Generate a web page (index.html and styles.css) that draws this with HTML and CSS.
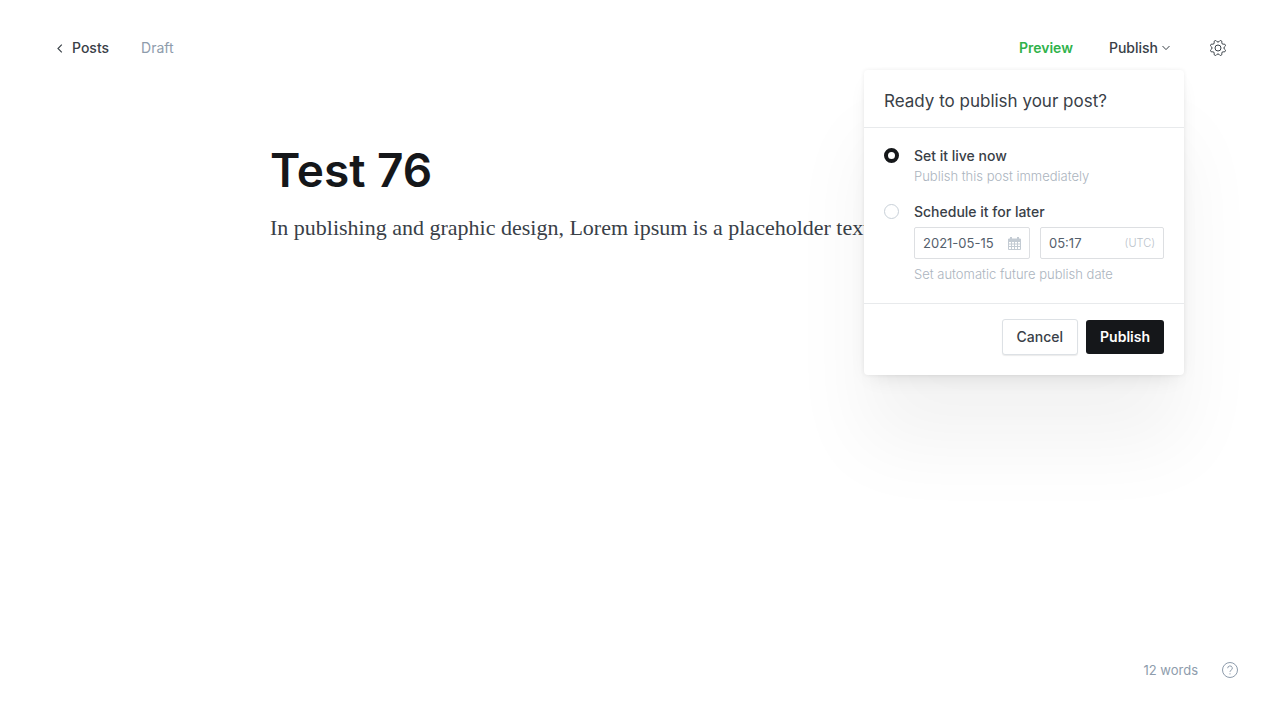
FILE: index.html
```html
<!DOCTYPE html>
<html lang="en">
<head>
<meta charset="utf-8">
<meta name="viewport" content="width=device-width, initial-scale=1">
<title>Test 76</title>
<link rel="stylesheet" href="styles.css">
</head>
<body>
<div class="editor">
  <header class="toolbar">
    <nav class="breadcrumb">
      <a class="back" href="#posts">
        <svg class="back-icon" viewBox="0 0 6 8" aria-hidden="true"><path d="M4.600.5 1.200 4l3.400 3.500"/></svg>
        Posts
      </a>
      <span class="status">Draft</span>
    </nav>
    <div class="actions">
      <button class="preview" type="button">Preview</button>
      <div class="publish-menu">
        <button class="publish-trigger" type="button" aria-expanded="true">
          Publish
          <svg class="chevron" viewBox="0 0 8 6" aria-hidden="true"><path d="M.5 1 4 4.6 7.5 1"/></svg>
        </button>
        <form class="dropdown">
          <h2 class="dropdown-title">Ready to publish your post?</h2>
          <div class="options">
            <div class="option">
              <input class="radio" type="radio" name="when" id="now" checked>
              <div class="option-body">
                <label class="option-label" for="now">Set it live now</label>
                <p class="hint">Publish this post immediately</p>
              </div>
            </div>
            <div class="option">
              <input class="radio" type="radio" name="when" id="later">
              <div class="option-body">
                <label class="option-label" for="later">Schedule it for later</label>
                <div class="fields">
                  <div class="field">
                    <input class="field-input" type="text" value="2021-05-15" aria-label="Publish date">
                    <svg class="calendar" viewBox="0 0 13 13" aria-hidden="true"><path d="M.5 2h12v10.500H.5zM.5 4.500h12M.5 7h12M.5 9.500h12M3.500 4.500v8M6.500 4.500v8M9.500 4.500v8"/><path d="M1 3h11M3 0v2M10 0v2" stroke-width="2"/></svg>
                  </div>
                  <div class="field field-time">
                    <input class="field-input" type="text" value="05:17" aria-label="Publish time">
                    <span class="zone">(UTC)</span>
                  </div>
                </div>
                <p class="hint">Set automatic future publish date</p>
              </div>
            </div>
          </div>
          <footer class="dropdown-footer">
            <button class="button" type="button">Cancel</button>
            <button class="button button-primary" type="submit">Publish</button>
          </footer>
        </form>
      </div>
      <button class="settings" type="button" aria-label="Settings">
        <svg class="gear" viewBox="0 0 24 24" aria-hidden="true"><path d="M10.546 2.438a1.957 1.957 0 0 0 2.908 0L14.4 1.4a1.959 1.959 0 0 1 3.41 1.413l-.071 1.4a1.958 1.958 0 0 0 2.051 2.058l1.4-.071A1.959 1.959 0 0 1 22.6 9.606l-1.038.94a1.96 1.96 0 0 0 0 2.909l1.038.94a1.959 1.959 0 0 1-1.413 3.41l-1.4-.071a1.958 1.958 0 0 0-2.056 2.056l.071 1.4A1.959 1.959 0 0 1 14.4 22.6l-.941-1.038a1.957 1.957 0 0 0-2.908 0L9.606 22.6A1.959 1.959 0 0 1 6.2 21.192l.072-1.4a1.958 1.958 0 0 0-2.056-2.056l-1.4.071A1.958 1.958 0 0 1 1.4 14.4l1.041-.94a1.96 1.96 0 0 0 0-2.909L1.4 9.606A1.958 1.958 0 0 1 2.812 6.2l1.4.071a1.958 1.958 0 0 0 2.055-2.06L6.2 2.812A1.959 1.959 0 0 1 9.606 1.4Z"/><circle cx="12" cy="12" r="4.500"/></svg>
      </button>
    </div>
  </header>
  <main class="post">
    <h1 class="post-title">Test 76</h1>
    <p class="post-text">In publishing and graphic design, Lorem ipsum is a placeholder text</p>
  </main>
  <footer class="status-bar">
    <span>12 words</span>
    <a class="help" href="#help" aria-label="Help">
      <svg class="help-icon" viewBox="0 0 16 16" aria-hidden="true"><circle cx="8" cy="8" r="7.500"/><path d="M5.700 6.200a2.300 2.300 0 1 1 3.300 2.100c-.7.300-1 .7-1 1.500M8 11.300v1.100"/></svg>
    </a>
  </footer>
</div>
</body>
</html>
```

FILE: styles.css
```css
* {
  box-sizing: border-box;
}

body {
  margin: 0;
  background: #fff;
  color: #394047;
  font: 400 13px/20px Inter, "Open Sans", sans-serif;
}

h1, h2, p {
  margin: 0;
}

button, input {
  font: inherit;
  color: inherit;
}

button {
  padding: 0;
  border: 0;
  background: none;
  cursor: pointer;
}

a {
  color: inherit;
  text-decoration: none;
}

svg {
  fill: none;
  stroke: currentColor;
  flex: none;
}

.editor {
  min-height: 100vh;
  display: flex;
  flex-direction: column;
}

.toolbar {
  display: flex;
  justify-content: space-between;
  align-items: center;
  padding: 32px 54px 0 56px;
}

.breadcrumb,
.actions {
  display: flex;
  align-items: center;
  height: 32px;
  font-size: 14px;
}

.breadcrumb {
  gap: 32px;
}

.back {
  display: flex;
  align-items: center;
  gap: 8px;
  font-weight: 500;
}

.back-icon {
  width: 8px;
  height: 9px;
}

.status {
  color: #8e9cac;
}

.preview {
  color: #30b24a;
  font-weight: 600;
}

.publish-menu {
  position: relative;
  margin: 0 26px 0 22px;
}

.publish-trigger {
  display: flex;
  align-items: center;
  gap: 4px;
  padding: 0 14px;
  font-weight: 500;
}

.chevron {
  width: 8px;
  height: 6px;
}

.gear {
  display: block;
  width: 16px;
  height: 16px;
  stroke-width: 1.500;
}

.dropdown {
  position: absolute;
  top: 32px;
  right: 0;
  width: 320px;
  border-radius: 4px;
  background: #fff;
  box-shadow: 0 0 4px rgba(0, 0, 0, .07), 0 8px 20px -8px rgba(0, 0, 0, .12), 0 70px 80px rgba(0, 0, 0, .05);
  font-size: 13px;
}

.dropdown-title {
  padding: 19px 20px 14px;
  border-bottom: 1px solid #e8eaec;
  font-size: 17px;
  line-height: 24px;
  font-weight: 400;
}

.options {
  display: flex;
  flex-direction: column;
  gap: 16px;
  padding: 18px 20px 19px;
}

.option {
  display: flex;
  gap: 15px;
}

.radio {
  appearance: none;
  flex: none;
  width: 15px;
  height: 15px;
  margin: 2px 0 0;
  border: 1px solid #c8d0d8;
  border-radius: 50%;
  background: #fff;
}

.radio:checked {
  border: 4px solid #15171a;
}

.option-body {
  flex: 1;
  min-width: 0;
}

.option-label {
  display: block;
  font-size: 14px;
  font-weight: 500;
}

.hint {
  color: #abb4be;
  font-weight: 300;
}

.fields {
  display: grid;
  grid-template-columns: 29fr 31fr;
  gap: 10px;
  padding: 5px 0;
}

.field {
  display: flex;
  align-items: center;
  min-width: 0;
  height: 32px;
  padding: 0 8px;
  border: 1px solid #dddfe2;
  border-radius: 2px;
}

.field-input {
  flex: 1;
  width: 0;
  min-width: 0;
  padding: 0;
  border: 0;
  outline: 0;
  background: none;
  color: #54606c;
}

.calendar {
  width: 13px;
  height: 13px;
  color: #c3cbd3;
}

.zone {
  color: #bac2ca;
  font-size: 11px;
  font-weight: 300;
}

.dropdown-footer {
  display: flex;
  justify-content: flex-end;
  align-items: center;
  gap: 8px;
  padding: 15px 20px 20px;
  border-top: 1px solid #e8eaec;
}

.button {
  height: 36px;
  padding: 0 14px;
  border: 1px solid #dde1e5;
  border-radius: 3px;
  background: #fff;
  box-shadow: 0 1px 1px rgba(0, 0, 0, .08);
  font-size: 14px;
  font-weight: 500;
}

.button-primary {
  height: 34px;
  border: 0;
  background: #15171a;
  color: #fff;
  box-shadow: none;
  font-weight: 600;
}

.post {
  flex: 1;
  width: 100%;
  max-width: 740px;
  margin: 0 auto;
  padding-top: 76px;
}

.post-title {
  color: #15171a;
  font-size: 46px;
  line-height: 60px;
  font-weight: 600;
}

.post-text {
  padding-top: 12px;
  font: 400 22px/32px Georgia, "Liberation Serif", serif;
}

.status-bar {
  display: flex;
  justify-content: flex-end;
  align-items: center;
  gap: 24px;
  padding: 0 42px 40px;
  color: #8e9cac;
}

.help-icon {
  display: block;
  width: 16px;
  height: 16px;
}
```
